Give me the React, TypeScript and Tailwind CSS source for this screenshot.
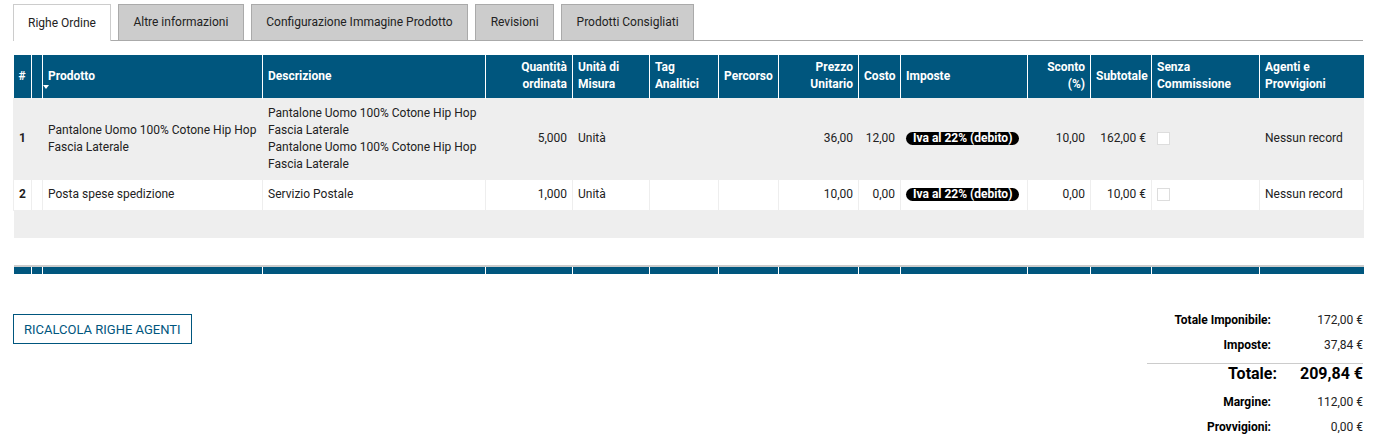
const COLS = [
  { w: 18, label: "#", align: "left" },
  { w: 11, label: "", align: "left" },
  { w: 220, label: "Prodotto", align: "left" },
  { w: 223, label: "Descrizione", align: "left" },
  { w: 87, label: "Quantità ordinata", align: "right" },
  { w: 77, label: "Unità di Misura", align: "left" },
  { w: 69, label: "Tag Analitici", align: "left" },
  { w: 60, label: "Percorso", align: "left" },
  { w: 80, label: "Prezzo Unitario", align: "right" },
  { w: 42, label: "Costo", align: "left" },
  { w: 127, label: "Imposte", align: "left" },
  { w: 63, label: "Sconto (%)", align: "right" },
  { w: 61, label: "Subtotale", align: "left" },
  { w: 108, label: "Senza Commissione", align: "left" },
  { w: 104, label: "Agenti e Provvigioni", align: "left" },
];

const TABS = [
  "Righe Ordine",
  "Altre informazioni",
  "Configurazione Immagine Prodotto",
  "Revisioni",
  "Prodotti Consigliati",
];

const ROWS = [
  {
    n: "1",
    prodotto: ["Pantalone Uomo 100% Cotone Hip Hop", "Fascia Laterale"],
    descr: [
      "Pantalone Uomo 100% Cotone Hip Hop",
      "Fascia Laterale",
      "Pantalone Uomo 100% Cotone Hip Hop",
      "Fascia Laterale",
    ],
    qty: "5,000",
    prezzo: "36,00",
    costo: "12,00",
    sconto: "10,00",
    subtotale: "162,00 €",
    bg: "bg-[#eeeeee]",
  },
  {
    n: "2",
    prodotto: ["Posta spese spedizione"],
    descr: ["Servizio Postale"],
    qty: "1,000",
    prezzo: "10,00",
    costo: "0,00",
    sconto: "0,00",
    subtotale: "10,00 €",
    bg: "bg-white",
  },
];

const TOTALS = [
  { label: "Totale Imponibile:", value: "172,00 €" },
  { label: "Imposte:", value: "37,84 €" },
];

const TOTALS_AFTER = [
  { label: "Margine:", value: "112,00 €" },
  { label: "Provvigioni:", value: "0,00 €" },
];

const Badge = () => (
  <span className="inline-block rounded-full bg-black px-[7px] text-[12px] font-bold leading-[13px] text-white">
    Iva al 22% (debito)
  </span>
);

const App = () => {
  const td = "border border-[#eeeeee] px-[5px] py-[6.5px] align-middle";
  return (
    <div className="min-h-screen bg-white px-[13px] pt-[4px] text-[12px] leading-[17px] text-[#222222] font-['Roboto','Liberation_Sans',sans-serif]">
      {/* tabs */}
      <div className="flex items-end gap-[7px] border-b border-[#aaaaaa]">
        {TABS.map((t, i) =>
          i === 0 ? (
            <div
              key={t}
              className="-mb-px flex h-[37px] items-center border border-b-0 border-[#cccccc] bg-white px-[14px]"
            >
              {t}
            </div>
          ) : (
            <div
              key={t}
              className="flex h-[36px] items-center border border-b-0 border-[#aaaaaa] bg-[#cccccc] px-[14.5px]"
            >
              {t}
            </div>
          )
        )}
      </div>

      {/* table */}
      <table className="mt-[14px] w-[1350px] table-fixed border-collapse">
        <colgroup>
          {COLS.map((c, i) => (
            <col key={i} style={{ width: c.w }} />
          ))}
        </colgroup>
        <thead>
          <tr className="h-[43px] bg-[#00567e] text-white">
            {COLS.map((c, i) => (
              <th
                key={i}
                className={`relative border-x border-white px-[5px] py-0 align-middle font-bold first:border-l-0 last:border-r-0 ${
                  c.align === "right" ? "text-right" : "text-left"
                }`}
              >
                {c.label}
                {i === 2 && (
                  <span className="absolute left-0 top-[30px] h-0 w-0 border-x-[3px] border-t-[4px] border-x-transparent border-t-white" />
                )}
              </th>
            ))}
          </tr>
        </thead>
        <tbody>
          {ROWS.map((r) => (
            <tr key={r.n} className={r.bg}>
              <td className={`${td} font-bold`}>{r.n}</td>
              <td className={td}></td>
              <td className={td}>
                {r.prodotto.map((l, i) => (
                  <div key={i}>{l}</div>
                ))}
              </td>
              <td className={`${td} py-[6px]`}>
                {r.descr.map((l, i) => (
                  <div key={i}>{l}</div>
                ))}
              </td>
              <td className={`${td} text-right`}>{r.qty}</td>
              <td className={td}>Unità</td>
              <td className={td}></td>
              <td className={td}></td>
              <td className={`${td} text-right`}>{r.prezzo}</td>
              <td className={`${td} text-right`}>{r.costo}</td>
              <td className={td}>
                <Badge />
              </td>
              <td className={`${td} text-right`}>{r.sconto}</td>
              <td className={`${td} text-right`}>{r.subtotale}</td>
              <td className={td}>
                <span className="block h-[13px] w-[13px] border border-[#dddddd] bg-white" />
              </td>
              <td className={td}>Nessun record</td>
            </tr>
          ))}
          <tr className="h-[28px] bg-[#eeeeee]">
            <td colSpan={15} className="p-0"></td>
          </tr>
          <tr className="h-[28px] bg-white">
            <td colSpan={15} className="p-0"></td>
          </tr>
        </tbody>
        <tfoot>
          <tr className="h-[8px]">
            {COLS.map((_, i) => (
              <td
                key={i}
                className="border-x border-t-2 border-x-white border-t-[#cccccc] bg-[#00567e] p-0 first:border-l-0 last:border-r-0"
              ></td>
            ))}
          </tr>
        </tfoot>
      </table>

      {/* bottom */}
      <div className="mt-[34px] flex items-start justify-between">
        <button className="mt-[6px] h-[30px] border border-[#00567e] px-[10px] text-[13px] uppercase text-[#00567e]">
          Ricalcola righe agenti
        </button>
        <div className="w-[216px]">
          <div className="grid grid-cols-[1fr_80px] gap-x-[12px]">
            {TOTALS.map((t) => (
              <div key={t.label} className="contents">
                <div className="flex h-[25px] items-center justify-end font-bold text-black">{t.label}</div>
                <div className="flex h-[25px] items-center justify-end">{t.value}</div>
              </div>
            ))}
          </div>
          <div className="mt-[5px] border-t border-[#cccccc]" />
          <div className="grid h-[26px] grid-cols-[1fr_80px] gap-x-[6px] pt-[1px] text-[16px] font-bold leading-[18px] text-black">
            <div className="text-right">Totale:</div>
            <div className="text-right">209,84 €</div>
          </div>
          <div className="grid grid-cols-[1fr_80px] gap-x-[12px]">
            {TOTALS_AFTER.map((t) => (
              <div key={t.label} className="contents">
                <div className="flex h-[25px] items-center justify-end font-bold text-black">{t.label}</div>
                <div className="flex h-[25px] items-center justify-end">{t.value}</div>
              </div>
            ))}
          </div>
        </div>
      </div>
    </div>
  );
};

export default App;
